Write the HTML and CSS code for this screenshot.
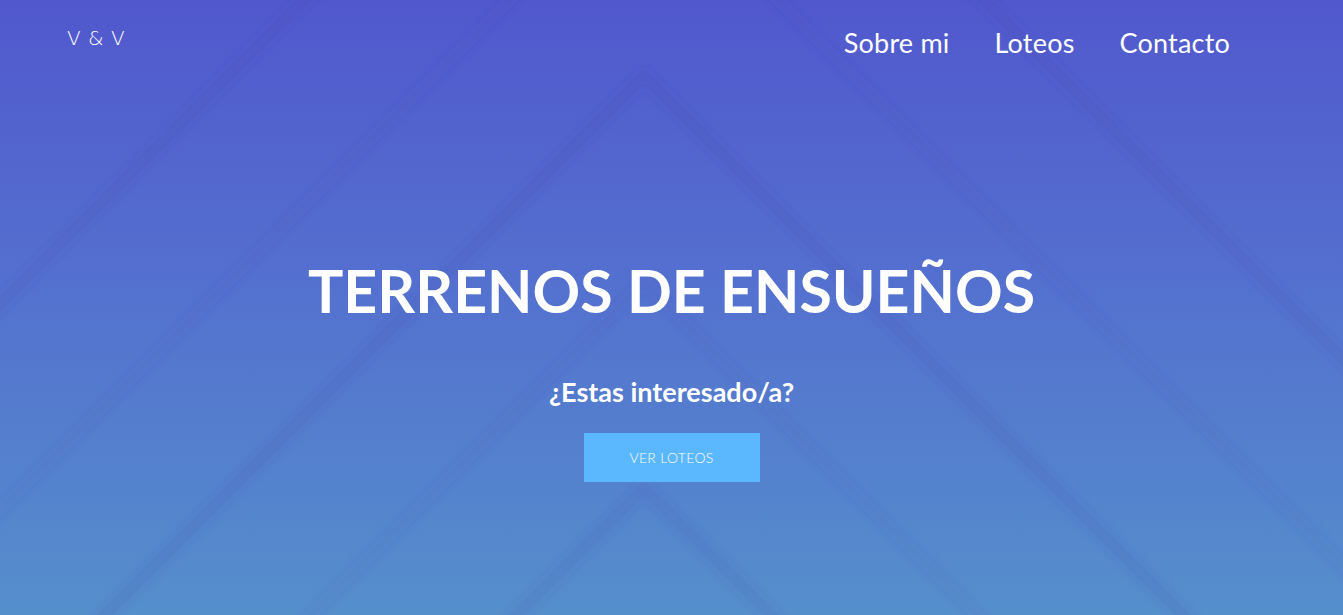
FILE: index.html
```html
<!DOCTYPE html>
<html lang="es">
<head>
<meta charset="utf-8">
<title>V &amp; V - Terrenos de ensueños</title>
<link rel="stylesheet" href="styles.css">
</head>
<body>
<div class="page">
  <svg class="bg" viewBox="0 0 1343 615" preserveAspectRatio="none" aria-hidden="true">
    <defs>
      <filter id="soft" x="-10%" y="-10%" width="120%" height="120%">
        <feGaussianBlur stdDeviation="5"/>
      </filter>
    </defs>
    <g filter="url(#soft)" fill="none" stroke="#3a46a6" stroke-width="12">
      <polyline stroke-opacity="0.15" points="-356,660 644,-340 1644,660"/>
      <polyline stroke-opacity="0.08" points="-356,866 644,-134 1644,866"/>
      <polyline stroke-opacity="0.16" points="-356,1076 644,76 1644,1076"/>
      <polyline stroke-opacity="0.08" points="-356,1282 644,282 1644,1282"/>
      <polyline stroke-opacity="0.15" points="-356,1488 644,488 1644,1488"/>
    </g>
  </svg>

  <header class="topbar">
    <div class="logo">V &amp; V</div>
    <nav class="nav">
      <a href="#sobre" class="nav-link">Sobre mi</a>
      <a href="#loteos" class="nav-link">Loteos</a>
      <a href="#contacto" class="nav-link">Contacto</a>
    </nav>
  </header>

  <main class="hero">
    <h1 class="hero-title">TERRENOS DE ENSUEÑOS</h1>
    <p class="hero-sub">¿Estas interesado/a?</p>
    <a href="#loteos" class="hero-btn">VER LOTEOS</a>
  </main>
</div>
</body>
</html>
```

FILE: styles.css
```css
* {
  box-sizing: border-box;
}

html, body {
  margin: 0;
  padding: 0;
  height: 100%;
}

body {
  font-family: "Lato", "Noto Sans", sans-serif;
  color: #ffffff;
  overflow: hidden;
}

.page {
  position: relative;
  height: 615px;
  background: linear-gradient(180deg, #5158cd 0%, #5470cf 45%, #558fcc 100%);
  display: flex;
  flex-direction: column;
  overflow: hidden;
}

.bg {
  position: absolute;
  inset: 0;
  width: 100%;
  height: 100%;
  z-index: 0;
}

.topbar {
  position: relative;
  z-index: 1;
  display: flex;
  justify-content: space-between;
  align-items: flex-start;
  padding: 24px 113px 0 67px;
}

.logo {
  font-family: "DejaVu Sans", sans-serif;
  font-weight: 200;
  font-size: 20px;
  letter-spacing: 1px;
  word-spacing: -1px;
  line-height: 28px;
}

.nav {
  display: flex;
  gap: 45px;
  padding-top: 3px;
}

.nav-link {
  color: #ffffff;
  text-decoration: none;
  font-size: 27px;
  font-weight: 400;
  letter-spacing: 0.2px;
  line-height: 32px;
}

.hero {
  position: relative;
  z-index: 1;
  display: flex;
  flex-direction: column;
  align-items: center;
  padding-top: 194px;
}

.hero-title {
  margin: 0;
  font-size: 59px;
  font-weight: 700;
  letter-spacing: 0;
  line-height: 76px;
}

.hero-sub {
  margin: 48px 0 0;
  font-size: 27px;
  font-weight: 700;
  line-height: 30px;
}

.hero-btn {
  margin-top: 26px;
  width: 176px;
  height: 49px;
  display: flex;
  align-items: center;
  justify-content: center;
  background: #5cb8fe;
  color: #ffffff;
  text-decoration: none;
  font-size: 14px;
  font-weight: 300;
  letter-spacing: 0.3px;
}
```
